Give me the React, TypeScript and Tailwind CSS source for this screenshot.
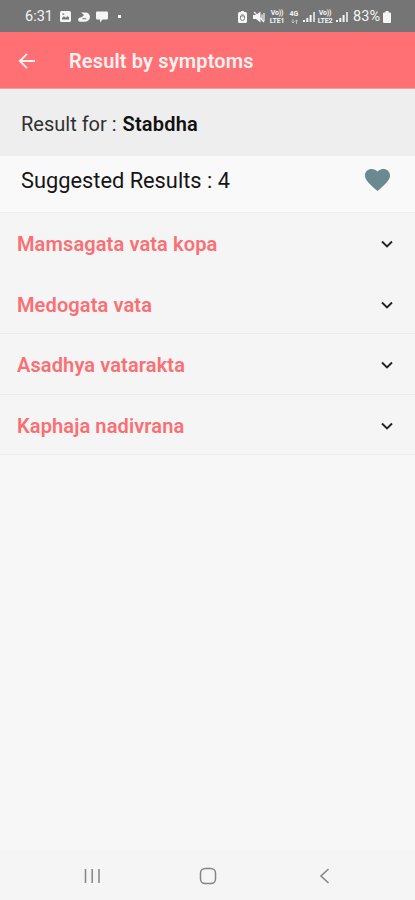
import { useState } from 'react';

type Condition = {
  id: number;
  name: string;
  divided: boolean;
};

const conditions: Condition[] = [
  { id: 1, name: 'Mamsagata vata kopa', divided: false },
  { id: 2, name: 'Medogata vata', divided: true },
  { id: 3, name: 'Asadhya vatarakta', divided: true },
  { id: 4, name: 'Kaphaja nadivrana', divided: true },
];

function SignalIcon() {
  return (
    <svg className="h-3 w-[13px] shrink-0" viewBox="0 0 13 12" fill="currentColor">
      <path d="M0 9h2v2H0zM3.3 7h2v4h-2zM6.6 4h2v7h-2z" />
      <path d="M10 1h2v10h-2z" opacity=".75" />
    </svg>
  );
}

function VolteLabel({ sim }: { sim: string }) {
  return (
    <span className="flex w-4 shrink-0 flex-col items-center text-[7px] leading-[8px] font-bold tracking-[-0.2px]">
      <span>Vo))</span>
      <span>LTE{sim}</span>
    </span>
  );
}

function StatusBar() {
  return (
    <div className="flex h-8 items-center bg-[#757575] pt-px pr-[24px] pl-[25px] text-[#f5f5f5]">
      <span className="w-[35px] pt-px text-[14.5px] leading-4">6:31</span>
      <div className="flex flex-1 items-center">
        <svg className="h-[11px] w-[11px]" viewBox="0 0 11 11">
          <rect width="11" height="11" rx="1.5" fill="currentColor" />
          <path d="M2 8.5V7l2-1.7 1.8 1.5L7.5 5 9 6.5v2zM2.4 2.5h1.8v1.3H2.4z" fill="#757575" />
        </svg>
        <svg className="ml-[7px] h-3 w-3" viewBox="0 0 12 12">
          <path d="M3 1.5h4.5A4.5 4.5 0 0 1 12 6a4.7 4.7 0 0 1-4.7 4.7H2a2 2 0 0 1-.5-3.9L4 6l2-2z" fill="currentColor" />
          <path d="M4.5 7.7h3.7" stroke="#757575" strokeWidth="1" />
        </svg>
        <svg className="ml-[6px] h-3 w-3" viewBox="0 0 12 12" fill="currentColor">
          <path d="M1.3.5h9.4A1.2 1.2 0 0 1 12 1.7v5.6a1.2 1.2 0 0 1-1.2 1.2H6.5L4 11.5v-3H1.3A1.2 1.2 0 0 1 0 7.3V1.7A1.2 1.2 0 0 1 1.3.5z" />
        </svg>
        <span className="ml-[10px] h-[3px] w-[3px] bg-current" />
      </div>
      <div className="flex items-center">
        <svg className="h-3 w-[9px]" viewBox="0 0 9 12">
          <path d="M3 0h3v1h1.5A1.5 1.5 0 0 1 9 2.5v8A1.5 1.5 0 0 1 7.5 12h-6A1.5 1.5 0 0 1 0 10.5v-8A1.5 1.5 0 0 1 1.5 1H3z" fill="currentColor" />
          <path d="M2.5 5v2.5a2 2 0 0 0 4 0V5zM3 4h3" fill="none" stroke="#757575" strokeWidth=".9" />
        </svg>
        <svg className="ml-[6px] h-3 w-3" viewBox="0 0 12 12">
          <path d="M0 4h3l4.5-3.5v11L3 8H0z" fill="currentColor" />
          <path d="M9 3.5v5M11 2v8M1 1l10 10" stroke="currentColor" strokeWidth="1.2" fill="none" />
        </svg>
        <span className="ml-1 flex">
          <VolteLabel sim="1" />
        </span>
        <span className="ml-[4px] flex w-[10px] flex-col items-center">
          <span className="text-[7px] leading-[9px] font-bold">4G</span>
          <svg className="h-[5px] w-[7px]" viewBox="0 0 7 5" fill="none" stroke="currentColor" strokeWidth=".8" opacity=".7">
            <path d="M2 0v4M.5 2.5 2 4l1.5-1.5M5.500 5V1M4 2.500 5.500 1 7 2.500" />
          </svg>
        </span>
        <span className="ml-[4px]">
          <SignalIcon />
        </span>
        <span className="ml-[1px] flex">
          <VolteLabel sim="2" />
        </span>
        <span className="ml-[3px]">
          <SignalIcon />
        </span>
        <span className="ml-[4px] w-[30px] pt-px text-[14.5px] leading-4 tracking-[0.1px]">83%</span>
        <svg className="h-3 w-2" viewBox="0 0 8 12" fill="currentColor">
          <path d="M2.5 0h3v1.5H7a1 1 0 0 1 1 1V11a1 1 0 0 1-1 1H1a1 1 0 0 1-1-1V2.5a1 1 0 0 1 1-1h1.500z" />
        </svg>
      </div>
    </div>
  );
}

function NavigationBar() {
  return (
    <nav className="flex h-[49px] items-center bg-[#f5f5f5] pl-[84px] text-[#858585]">
      <svg className="h-4 w-4" viewBox="0 0 16 16" fill="none" stroke="currentColor" strokeWidth="1.5">
        <path d="M1.5 1v14M8.2 1v14M15 1v14" />
      </svg>
      <svg className="ml-[99px] h-[18px] w-[18px]" viewBox="0 0 18 18" fill="none" stroke="currentColor" strokeWidth="1.5">
        <rect x="1.5" y="1.5" width="15" height="15" rx="4.5" />
      </svg>
      <svg className="ml-[102px] h-4 w-[11px]" viewBox="0 0 11 16" fill="none" stroke="currentColor" strokeWidth="1.6">
        <path d="M9.5 1 2 8l7.5 7" />
      </svg>
    </nav>
  );
}

export default function App() {
  const [openId, setOpenId] = useState<number | null>(null);

  return (
    <div className="flex h-[900px] w-full flex-col overflow-hidden bg-[#f7f7f7] font-['Roboto',sans-serif]">
      <StatusBar />

      <header className="flex h-[57px] items-center border-b border-[#fb9a9c] bg-[#ff7075] pt-[2px] pl-[18px] text-[#fff1ef]">
        <svg className="h-[18px] w-[18px]" viewBox="0 0 18 18" fill="none" stroke="currentColor" strokeWidth="1.9">
          <path d="M17 9H2M9 1.8 1.8 9 9 16.2" />
        </svg>
        <h1 className="ml-[33px] text-[20px] leading-6 font-semibold tracking-[0.14px]">Result by symptoms</h1>
      </header>

      <div className="flex h-[67px] items-center bg-[#eeeeee] pt-[2px] pl-[21px] text-[20px] leading-6 text-[#303030]">
        <p>
          Result for : <span className="ml-px font-semibold tracking-[0.2px] text-[#111111]">Stabdha</span>
        </p>
      </div>

      <div className="flex h-[57px] items-center justify-between border-b border-[#eeeeee] bg-[#f9f9f9] pr-[25px] pb-[7px] pl-[21px]">
        <p className="text-[21.8px] leading-6 text-[#151515]">Suggested Results : 4</p>
        <svg className="h-[23px] w-[25px]" viewBox="0 0 25 23" fill="#6b8990">
          <path d="M12.5 22 10.7 20.4C4.3 14.7 0 10.800 0 6.400 0 2.600 3 0 6.800 0c2.200 0 4.300 1 5.700 2.600C13.900 1 16 0 18.200 0 22 0 25 2.600 25 6.400c0 4.400-4.300 8.300-10.700 14z" />
        </svg>
      </div>

      <ul className="flex-1 bg-[#f7f7f7]">
        {conditions.map((condition) => (
          <li
            key={condition.id}
            className={condition.divided ? 'border-b border-[#ebebeb] bg-[#f5f5f5]' : 'border-b border-[#f5f5f5] bg-[#f5f5f5]'}
          >
            <button
              onClick={() => setOpenId(openId === condition.id ? null : condition.id)}
              className="flex h-[59.5px] w-full items-center justify-between pt-[2.5px] pr-[22px] pl-[17px] text-left"
            >
              <span className="text-[20px] leading-6 font-semibold tracking-[0.12px] text-[#fa6f74]">{condition.name}</span>
              <svg className="h-2 w-3" viewBox="0 0 12 8" fill="none" stroke="#222222" strokeWidth="1.9">
                <path d={openId === condition.id ? 'm1 6.5 5-5 5 5' : 'm1 1.5 5 5 5-5'} />
              </svg>
            </button>
          </li>
        ))}
      </ul>

      <NavigationBar />
    </div>
  );
}
